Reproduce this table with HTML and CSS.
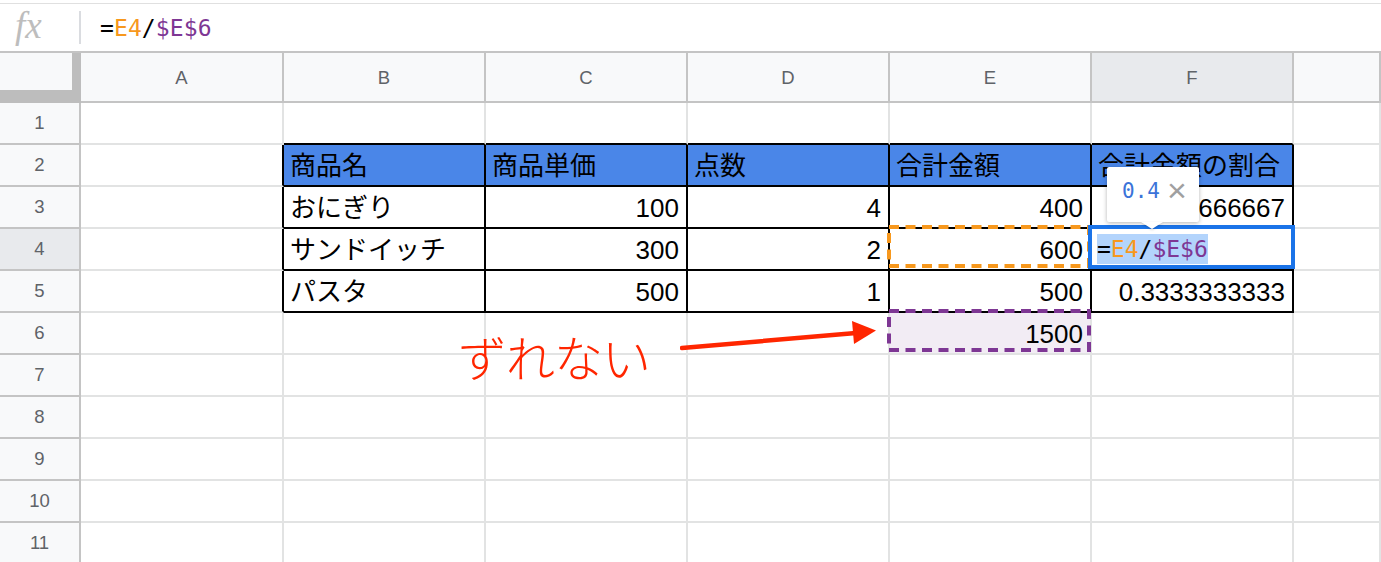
FILE: index.html
```html
<!DOCTYPE html>
<html lang="ja">
<head>
<meta charset="utf-8">
<title>Sheet</title>
<link rel="stylesheet" href="styles.css">
</head>
<body>
<div class="app">
  <div class="topline"></div>
  <div class="fbar">
    <div class="fx">fx</div>
    <div class="fsep"></div>
    <div class="ftext">=<span class="r1">E4</span>/<span class="r2">$E$6</span></div>
  </div>
  <div class="sheet">
    <div class="corner"></div>
    <div class="ch">A</div><div class="ch">B</div><div class="ch">C</div><div class="ch">D</div><div class="ch">E</div><div class="ch sel">F</div><div class="ch"></div>

    <div class="rh">1</div>
    <div class="c"></div><div class="c bb"></div><div class="c bb"></div><div class="c bb"></div><div class="c bb"></div><div class="c bb"></div><div class="c"></div>

    <div class="rh">2</div>
    <div class="c br"></div><div class="c th">商品名</div><div class="c th">商品単価</div><div class="c th">点数</div><div class="c th">合計金額</div><div class="c th">合計金額の割合</div><div class="c"></div>

    <div class="rh">3</div>
    <div class="c br"></div><div class="c tb">おにぎり</div><div class="c tb num">100</div><div class="c tb num">4</div><div class="c tb num">400</div><div class="c tb num">0.6666666667</div><div class="c"></div>

    <div class="rh sel">4</div>
    <div class="c br"></div><div class="c tb">サンドイッチ</div><div class="c tb num">300</div><div class="c tb num">2</div><div class="c tb num">600</div><div class="c tb num"></div><div class="c"></div>

    <div class="rh">5</div>
    <div class="c br"></div><div class="c tb">パスタ</div><div class="c tb num">500</div><div class="c tb num">1</div><div class="c tb num">500</div><div class="c tb num">0.3333333333</div><div class="c"></div>

    <div class="rh">6</div>
    <div class="c"></div><div class="c"></div><div class="c"></div><div class="c"></div><div class="c num purple-bg">1500</div><div class="c"></div><div class="c"></div>

    <div class="rh">7</div>
    <div class="c"></div><div class="c"></div><div class="c"></div><div class="c"></div><div class="c"></div><div class="c"></div><div class="c"></div>

    <div class="rh">8</div>
    <div class="c"></div><div class="c"></div><div class="c"></div><div class="c"></div><div class="c"></div><div class="c"></div><div class="c"></div>

    <div class="rh">9</div>
    <div class="c"></div><div class="c"></div><div class="c"></div><div class="c"></div><div class="c"></div><div class="c"></div><div class="c"></div>

    <div class="rh">10</div>
    <div class="c"></div><div class="c"></div><div class="c"></div><div class="c"></div><div class="c"></div><div class="c"></div><div class="c"></div>

    <div class="rh">11</div>
    <div class="c"></div><div class="c"></div><div class="c"></div><div class="c"></div><div class="c"></div><div class="c"></div><div class="c"></div>
  </div>

  <svg class="dash dash-e4" width="204" height="43" viewBox="0 0 204 43">
    <rect x="2" y="2" width="200" height="39" fill="none" stroke="#f7981d" stroke-width="4" stroke-dasharray="10 6.5"/>
  </svg>
  <svg class="dash dash-e6" width="204" height="43" viewBox="0 0 204 43">
    <rect x="2" y="2" width="200" height="39" fill="none" stroke="#7e3794" stroke-width="4" stroke-dasharray="10 6.5"/>
  </svg>

  <div class="editor">
    <span class="hl">=<span class="r1">E4</span>/<span class="r2">$E$6</span></span>
  </div>

  <div class="tip">
    <span class="tipval">0.4</span><span class="tipx">×</span>
    <span class="tiparrow"></span>
  </div>

  <svg class="arrow" width="210" height="40" viewBox="0 0 210 40">
    <line x1="2" y1="29" x2="176" y2="14" stroke="#ff2600" stroke-width="4.5" stroke-linecap="round"/>
    <polygon points="172,2 196,11.5 174,25" fill="#ff2600"/>
  </svg>
  <div class="note">ずれない</div>
</div>
</body>
</html>
```

FILE: styles.css
```css
* { box-sizing: border-box; }
html, body { margin: 0; padding: 0; background: #fff; }
body {
  font-family: "Liberation Sans", "Noto Sans CJK JP", sans-serif;
  color: #000;
  overflow: hidden;
}
.app {
  position: relative;
  width: 1381px;
  height: 562px;
  overflow: hidden;
}
.topline {
  height: 4px;
  border-bottom: 1px solid #e0e0e0;
}
.fbar {
  height: 47px;
  display: flex;
  align-items: center;
}
.fx {
  width: 79px;
  padding-left: 15px;
  font-family: "Liberation Serif", serif;
  font-style: italic;
  font-size: 37px;
  color: #bdbdbd;
  line-height: 1;
  margin-top: -4px;
}
.fsep {
  width: 2px;
  height: 33px;
  background: #dadce0;
  margin-right: 19px;
}
.ftext, .editor, .tipval {
  font-family: "DejaVu Sans Mono", monospace;
}
.ftext {
  font-size: 23px;
  letter-spacing: 0.1px;
}
.r1 { color: #f7981d; }
.r2 { color: #7e3794; }

.sheet {
  border-top: 2px solid #c4c4c4;
  display: grid;
  grid-template-columns: 81px 203px repeat(5, 202px) 1fr;
  grid-template-rows: 50px repeat(11, 42px);
}
.corner {
  background: #f8f9fa;
  border-right: 9px solid #bdbdbd;
  border-bottom: 13px solid #bdbdbd;
}
.ch {
  background: #f8f9fa;
  border-right: 2px solid #c4c4c4;
  border-bottom: 2px solid #c4c4c4;
  display: flex;
  align-items: center;
  justify-content: center;
  font-size: 18.5px;
  color: #5f6368;
  padding-top: 1px;
}
.rh {
  background: #f8f9fa;
  border-right: 2px solid #c4c4c4;
  border-bottom: 2px solid #c4c4c4;
  display: flex;
  align-items: center;
  justify-content: center;
  font-size: 18.5px;
  color: #5f6368;
}
.sel { background: #e8eaed; }
.c {
  border-right: 2px solid #e2e3e3;
  border-bottom: 2px solid #e2e3e3;
  display: flex;
  align-items: center;
  padding: 1px 7px 0 6px;
  font-size: 26px;
  line-height: 40px;
  white-space: nowrap;
  overflow: hidden;
}
.num { justify-content: flex-end; }
.bb { border-bottom-color: #000; }
.br { border-right-color: #000; }
.th {
  background: #4a86e8;
  border-right-color: #000;
  border-bottom-color: #000;
}
.tb {
  border-right-color: #000;
  border-bottom-color: #000;
}
.purple-bg { background: #f2ecf4; }

.dash { position: absolute; left: 887px; }
.dash-e4 { top: 225px; }
.dash-e6 { top: 309px; }

.editor {
  position: absolute;
  left: 1088px;
  top: 225px;
  width: 207px;
  height: 44px;
  border: 4px solid #1a73e8;
  background: #fff;
  padding-left: 5px;
  display: flex;
  align-items: center;
  font-size: 23px;
}
.hl {
  background: #b3d4fc;
  line-height: 30px;
  height: 30px;
  display: inline-block;
  margin-top: 3px;
}
.tip {
  position: absolute;
  left: 1107px;
  top: 167px;
  width: 92px;
  height: 55px;
  background: #fff;
  border-radius: 2px;
  box-shadow: 0 1px 4px rgba(0,0,0,0.3);
  display: flex;
  align-items: center;
  padding: 0 0 8px 15px;
}
.tipval {
  font-size: 21px;
  color: #3b73d9;
}
.tipx {
  font-family: "Liberation Sans", sans-serif;
  font-size: 34px;
  color: #a0a0a0;
  margin-left: 7px;
  line-height: 1;
  margin-top: -2px;
}
.tiparrow {
  position: absolute;
  left: 34px;
  bottom: -7px;
  width: 0;
  height: 0;
  border-left: 11px solid transparent;
  border-right: 11px solid transparent;
  border-top: 7px solid #fff;
  filter: drop-shadow(0 1px 1px rgba(0,0,0,0.2));
}
.arrow {
  position: absolute;
  left: 680px;
  top: 319px;
}
.note {
  position: absolute;
  left: 458px;
  top: 329px;
  font-family: "Noto Sans CJK JP", sans-serif;
  font-weight: 300;
  font-size: 49px;
  line-height: 1.1;
  color: #ff2600;
  letter-spacing: -1px;
}
```
